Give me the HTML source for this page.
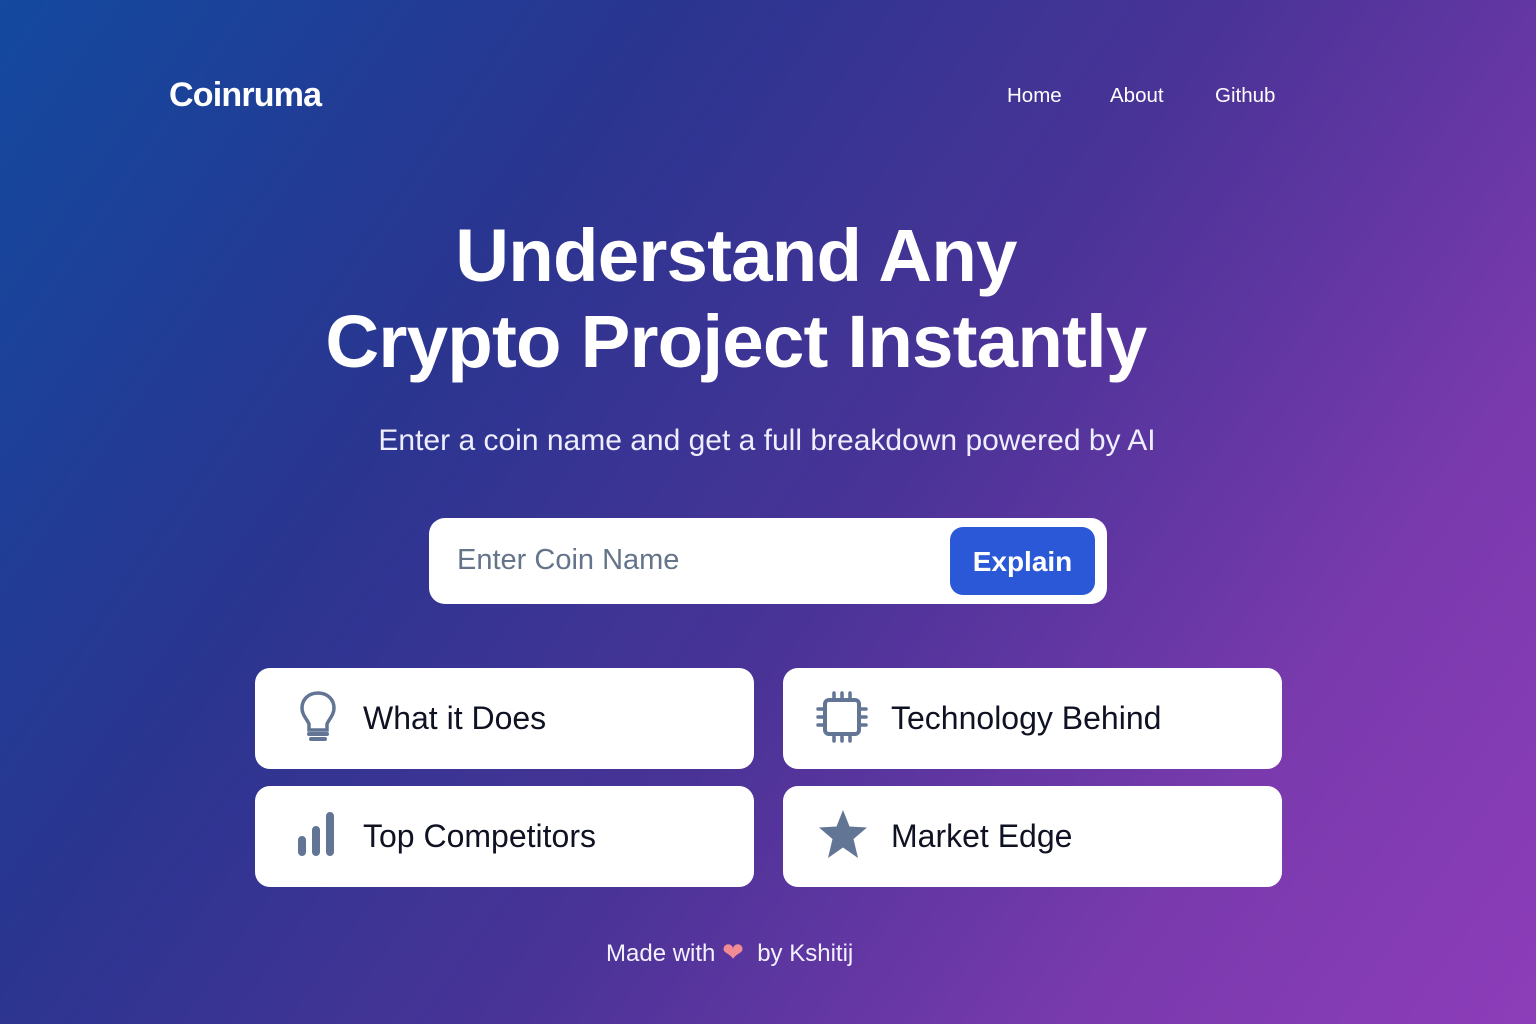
<!DOCTYPE html>
<html><head><meta charset="utf-8"><style>
*{margin:0;padding:0;box-sizing:border-box}
body{width:1536px;height:1024px;overflow:hidden;font-family:"Liberation Sans",sans-serif;color:#fff;
background:linear-gradient(125deg,#13499f 0%,#2a3590 30%,#4a3397 55%,#7a3aae 80%,#8d3db9 100%);position:relative}
.logo{position:absolute;left:169px;top:76px;font-size:34px;font-weight:600;letter-spacing:-0.8px}
.nav{position:absolute;top:84px;font-size:20.5px}
h1{position:absolute;left:0;width:1472px;top:213px;text-align:center;font-size:74.5px;line-height:86px;font-weight:700;letter-spacing:-0.8px}
.sub{position:absolute;left:0;width:1534px;top:424px;text-align:center;font-size:30px;color:#eef}
.search{position:absolute;left:429px;top:518px;width:678px;height:86px;background:#fff;border-radius:16px}
.search .ph{position:absolute;left:28px;top:26px;font-size:29px;color:#64748b}
.btn{position:absolute;left:521px;top:9px;width:145px;height:68px;background:#2b58d6;border-radius:13px;font-size:28px;font-weight:700;text-align:center;line-height:70px;color:#fff}
.card{position:absolute;width:499px;height:101px;background:#fff;border-radius:15px;color:#0f1222;font-size:32px;font-weight:500}
.card span{position:absolute;left:108px;top:32px}
.card svg{position:absolute}
.foot{position:absolute;left:606px;top:938px;font-size:24px;line-height:28px;color:#f2f2ff;white-space:nowrap}
.foot b{color:#f28b95;font-size:26px;font-weight:normal;line-height:28px}
</style></head><body>
<div class="logo">Coinruma</div>
<div class="nav" style="left:1007px">Home</div>
<div class="nav" style="left:1110px">About</div>
<div class="nav" style="left:1215px">Github</div>
<h1>Understand Any<br>Crypto Project Instantly</h1>
<div class="sub">Enter a coin name and get a full breakdown powered by AI</div>
<div class="search"><div class="ph">Enter Coin Name</div><div class="btn">Explain</div></div>

<div class="card" style="left:255px;top:668px">
<svg style="left:42px;top:22px" width="42" height="56" viewBox="0 0 42 56"><path d="M21 3C11 3 5 10 5 18c0 7 5 11 7 16v6h18v-6c2-5 7-9 7-16C37 10 31 3 21 3z" fill="none" stroke="#627594" stroke-width="3.5"/><path d="M12 44h18M14 49h14" stroke="#627594" stroke-width="4" stroke-linecap="round"/></svg>
<span>What it Does</span></div>
<div class="card" style="left:783px;top:668px">
<svg style="left:32px;top:22px" width="54" height="54" viewBox="0 0 54 54"><rect x="10" y="10" width="34" height="34" rx="4" fill="none" stroke="#627594" stroke-width="4"/><g stroke="#627594" stroke-width="3.5" stroke-linecap="round"><path d="M19 3v7M27 3v7M35 3v7M19 44v7M27 44v7M35 44v7M3 19h7M3 27h7M3 35h7M44 19h7M44 27h7M44 35h7"/></g></svg>
<span>Technology Behind</span></div>
<div class="card" style="left:255px;top:786px">
<svg style="left:42px;top:24px" width="42" height="48" viewBox="0 0 42 48"><g stroke="#627594" stroke-width="8" stroke-linecap="round"><path d="M5 30v12M19 20v22M33 6v36"/></g></svg>
<span>Top Competitors</span></div>
<div class="card" style="left:783px;top:786px">
<svg style="left:34px;top:22px" width="52" height="52" viewBox="0 0 52 52"><path d="M26 2l6.5 16.5L50 19.5 36.5 31 41 50 26 39.5 11 50l4.5-19L2 19.5l17.5-1z" fill="#627594"/></svg>
<span>Market Edge</span></div>

<div class="foot">Made with <b>❤</b>&nbsp;&nbsp;by&nbsp;Kshitij</div>
</body></html>
